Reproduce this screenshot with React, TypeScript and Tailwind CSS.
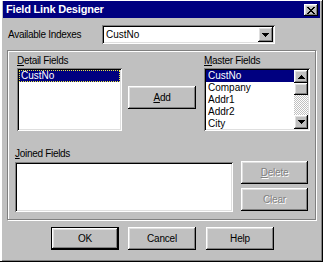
import React from "react";

const raised =
  "shadow-[inset_-1px_-1px_0_#000,inset_1px_1px_0_#fff,inset_-2px_-2px_0_#808080,inset_2px_2px_0_#dfdfdf]";
const sunken =
  "shadow-[inset_1px_1px_0_#808080,inset_-1px_-1px_0_#fff,inset_2px_2px_0_#000,inset_-2px_-2px_0_#dfdfdf]";

function Down() {
  return (
    <svg width="7" height="4" viewBox="0 0 7 4" shapeRendering="crispEdges">
      <path d="M0 0h7v1H0zM1 1h5v1H1zM2 2h3v1H2zM3 3h1v1H3z" fill="#000" />
    </svg>
  );
}
function Up() {
  return (
    <svg width="7" height="4" viewBox="0 0 7 4" shapeRendering="crispEdges">
      <path d="M3 0h1v1H3zM2 1h3v1H2zM1 2h5v1H1zM0 3h7v1H0z" fill="#000" />
    </svg>
  );
}
function CloseX() {
  return (
    <svg width="8" height="7" viewBox="0 0 8 7" shapeRendering="crispEdges">
      <path
        d="M0 0h2v1H0zM6 0h2v1H6zM1 1h2v1H1zM5 1h2v1H5zM2 2h4v1H2zM3 3h2v1H3zM2 4h4v1H2zM1 5h2v1H1zM5 5h2v1H5zM0 6h2v1H0zM6 6h2v1H6z"
        fill="#000"
      />
    </svg>
  );
}

function Btn({
  children,
  className = "",
  disabled = false,
  def = false,
}: {
  children: React.ReactNode;
  className?: string;
  disabled?: boolean;
  def?: boolean;
}) {
  return (
    <div
      className={
        "flex items-center justify-center bg-[#c0c0c0] text-[10px] leading-none tracking-[-0.2px] " +
        (def
          ? "border border-black shadow-[inset_-1px_-1px_0_#000,inset_1px_1px_0_#fff,inset_-2px_-2px_0_#808080,inset_2px_2px_0_#dfdfdf] "
          : raised + " ") +
        (disabled ? "text-[#808080] [text-shadow:1px_1px_0_#fff] " : "text-black ") +
        className
      }
    >
      {children}
    </div>
  );
}

export default function App() {
  const master = ["CustNo", "Company", "Addr1", "Addr2", "City"];
  return (
    <div className="w-[323px] h-[262px] bg-[#c0c0c0] font-['Liberation_Sans',Arial,sans-serif] text-black pt-[1px] px-[3px] shadow-[inset_-1px_-1px_0_#000,inset_2px_1px_0_#fff,inset_1px_0_0_#dfdfdf,inset_-2px_-2px_0_#808080] overflow-hidden">
      {/* Title bar */}
      <div className="h-[17px] bg-[#000080] flex items-start justify-between pl-[3px] pr-[2px]">
        <span className="text-white font-bold text-[11px] leading-[17px] tracking-[-0.2px]">
          Field Link Designer
        </span>
        <div className={"mt-[3px] w-[14px] h-[12px] bg-[#c0c0c0] flex items-center justify-center " + raised}>
          <CloseX />
        </div>
      </div>

      {/* Available Indexes */}
      <div className="mt-[7px] flex items-center">
        <div className="w-[99px] pl-[5px] text-[10px] tracking-[-0.3px] leading-[12px]">
          Available Indexes
        </div>
        <div className={"w-[173px] h-[19px] bg-white p-[2px] flex " + sunken}>
          <div className="flex-1 pl-[2px] text-[10px] leading-[15px]">CustNo</div>
          <div className={"w-[15px] h-full bg-[#c0c0c0] flex items-center justify-center " + raised}>
            <Down />
          </div>
        </div>
      </div>

      {/* Frame */}
      <div className="mt-[6px] ml-[4px] w-[309px] h-[170px] border border-[#808080] shadow-[inset_1px_1px_0_#fff,1px_1px_0_#fff]">
        {/* top section */}
        <div className="flex pt-[4px] pl-[9px]">
          <div className="w-[105px]">
            <div className="h-[12px] text-[10px] leading-[12px] tracking-[-0.3px]">
              <span className="underline underline-offset-[1px]">D</span>etail Fields
            </div>
            <div className={"mt-[1px] h-[63px] bg-white p-[2px] " + sunken}>
              <div className="h-[12px] bg-[#000080] text-white text-[10px] leading-[10px] pl-[1px] border border-dotted border-[#e8e840]">
                CustNo
              </div>
            </div>
          </div>
          <Btn className="ml-[6px] mt-[31px] w-[68px] h-[23px]">
            <span className="underline underline-offset-[1px]">A</span>dd
          </Btn>
          <div className="ml-[8px] w-[106px]">
            <div className="h-[12px] text-[10px] leading-[12px] tracking-[-0.3px]">
              <span className="underline underline-offset-[1px]">M</span>aster Fields
            </div>
            <div className={"mt-[1px] h-[63px] bg-white p-[2px] flex " + sunken}>
              <div className="flex-1 overflow-hidden">
                {master.map((m, i) => (
                  <div
                    key={m}
                    className={
                      "h-[12px] text-[10px] leading-[12px] pl-[2px] " +
                      (i === 0 ? "bg-[#000080] text-white" : "")
                    }
                  >
                    {m}
                  </div>
                ))}
              </div>
              <div className="w-[14px] h-full flex flex-col">
                <div className={"h-[13px] bg-[#c0c0c0] flex items-center justify-center " + raised}>
                  <Up />
                </div>
                <div className={"h-[12px] bg-[#c0c0c0] " + raised} />
                <div className="flex-1 bg-[repeating-conic-gradient(#c0c0c0_0_25%,#fff_0_50%)] bg-size-[2px_2px]" />
                <div className={"h-[14px] bg-[#c0c0c0] flex items-center justify-center " + raised}>
                  <Down />
                </div>
              </div>
            </div>
          </div>
        </div>

        {/* joined section */}
        <div className="flex mt-[17px] pl-[7px]">
          <div className="w-[218px]">
            <div className="h-[12px] text-[10px] leading-[12px] tracking-[-0.3px]">
              <span className="underline underline-offset-[1px]">J</span>oined Fields
            </div>
            <div className={"mt-[2px] h-[50px] bg-white " + sunken} />
          </div>
          <div className="ml-[8px] mt-[13px] flex flex-col gap-[4px]">
            <Btn disabled className="w-[67px] h-[23px]">
              <span className="underline underline-offset-[1px]">D</span>elete
            </Btn>
            <Btn disabled className="w-[67px] h-[23px]">
              Clear
            </Btn>
          </div>
        </div>
      </div>

      {/* bottom buttons */}
      <div className="mt-[7px] ml-[48px] flex">
        <Btn def className="w-[68px] h-[23px]">
          OK
        </Btn>
        <Btn className="ml-[9px] w-[68px] h-[23px]">Cancel</Btn>
        <Btn className="ml-[10px] w-[68px] h-[23px]">Help</Btn>
      </div>
    </div>
  );
}
